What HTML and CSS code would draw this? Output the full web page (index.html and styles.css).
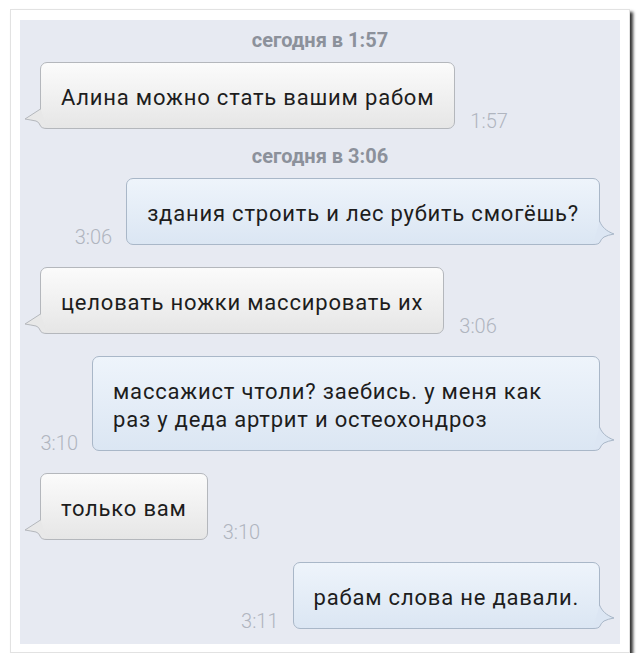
FILE: index.html
```html
<!DOCTYPE html>
<html lang="ru">
<head>
  <meta charset="UTF-8">
  <title>Диалог</title>
  <link rel="stylesheet" href="styles.css">
</head>
<body>
  <div class="frame">
    <div class="chat">
      <div class="date">сегодня в 1:57</div>
      <div class="row in">
        <div class="bubble">
          <svg class="tail" width="24" height="20" viewBox="0 0 24 20"><path d="M16.5 0 L1 10 Q7 11 12 12 Q15 13 16 16 Q17 19.5 23 19.5" /></svg>
          Алина можно стать вашим рабом
        </div>
        <span class="time">1:57</span>
      </div>

      <div class="date">сегодня в 3:06</div>
      <div class="row out">
        <span class="time">3:06</span>
        <div class="bubble">
          <svg class="tail" width="24" height="24" viewBox="0 0 24 24"><path d="M7.5 0 C10 6 14 10 22 13 Q16 14 12 16 Q9 18 8 21 Q7 23.5 1 23.5" /></svg>
          здания строить и лес рубить смогёшь?
        </div>
      </div>

      <div class="row in">
        <div class="bubble">
          <svg class="tail" width="24" height="20" viewBox="0 0 24 20"><path d="M16.5 0 L1 10 Q7 11 12 12 Q15 13 16 16 Q17 19.5 23 19.5" /></svg>
          целовать ножки массировать их
        </div>
        <span class="time">3:06</span>
      </div>

      <div class="row out">
        <span class="time">3:10</span>
        <div class="bubble long">
          <svg class="tail" width="24" height="24" viewBox="0 0 24 24"><path d="M7.5 0 C10 6 14 10 22 13 Q16 14 12 16 Q9 18 8 21 Q7 23.5 1 23.5" /></svg>
          массажист чтоли? заебись. у меня как<br>раз у деда артрит и остеохондроз
        </div>
      </div>

      <div class="row in">
        <div class="bubble">
          <svg class="tail" width="24" height="20" viewBox="0 0 24 20"><path d="M16.5 0 L1 10 Q7 11 12 12 Q15 13 16 16 Q17 19.5 23 19.5" /></svg>
          только вам
        </div>
        <span class="time">3:10</span>
      </div>

      <div class="row out">
        <span class="time">3:11</span>
        <div class="bubble">
          <svg class="tail" width="24" height="24" viewBox="0 0 24 24"><path d="M7.5 0 C10 6 14 10 22 13 Q16 14 12 16 Q9 18 8 21 Q7 23.5 1 23.5" /></svg>
          рабам слова не давали.
        </div>
      </div>
    </div>
  </div>
</body>
</html>
```

FILE: styles.css
```css
* {
  margin: 0;
  padding: 0;
  box-sizing: border-box;
}

body {
  background: #fff;
  font-family: Roboto, "Noto Sans", sans-serif;
  padding: 9px 0 0 10px;
}

.frame {
  width: 620px;
  background: #fff;
  border: 1px solid #e2e2e2;
  padding: 10px 9px 8px 9px;
  box-shadow: 3px 3px 3px rgba(0, 0, 0, 0.8);
}

.chat {
  background: #e7eaf2;
  height: 624px;
  padding: 10px 20px 0 20px;
  display: flex;
  flex-direction: column;
}

.date {
  text-align: center;
  font-weight: bold;
  font-size: 20px;
  color: #8c919b;
  line-height: 20px;
}

.chat .date + .row {
  margin-top: 12px;
}

.row + .date {
  margin-top: 17px;
}

.row + .row {
  margin-top: 22px;
}

.row {
  display: flex;
  align-items: flex-end;
}

.row.out {
  justify-content: flex-end;
}

.bubble {
  position: relative;
  font-size: 22px;
  letter-spacing: 0.8px;
  line-height: 28px;
  color: #1d1d1d;
  padding: 21px 20px 16px;
  border-radius: 7px;
  white-space: nowrap;
}

.bubble.long {
  width: 508px;
}

.in .bubble {
  background: linear-gradient(#fbfbfb, #e6e6e6);
  border: 1px solid #b4b7bc;
}

.out .bubble {
  background: linear-gradient(#eef4fb, #dbe6f3);
  border: 1px solid #a9b7c8;
}

.tail {
  position: absolute;
  bottom: -1px;
}

.tail path {
  stroke-width: 1;
}

.in .tail {
  left: -17px;
}

.in .tail path {
  fill: #e8e8e8;
  stroke: #b4b7bc;
}

.out .tail {
  right: -17px;
}

.out .tail path {
  fill: #dce6f3;
  stroke: #a9b7c8;
}

.time {
  font-size: 20px;
  font-weight: 300;
  color: #b0b5bf;
  line-height: 20px;
  margin-bottom: -2px;
}

.in .time {
  margin-left: 15px;
}

.out .time {
  margin-right: 14px;
}
```
